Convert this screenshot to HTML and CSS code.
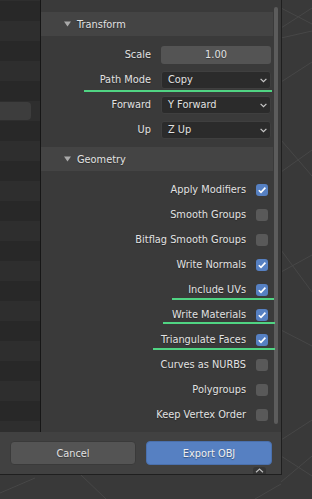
FILE: index.html
```html
<!DOCTYPE html>
<html>
<head>
<meta charset="utf-8">
<link rel="stylesheet" href="styles.css">
</head>
<body>
<svg class="viewport" width="312" height="499" viewBox="0 0 312 499">
  <g stroke="#474747" stroke-width="1" fill="none">
    <line x1="281" y1="8" x2="312" y2="24"/>
    <line x1="281" y1="28" x2="312" y2="8"/>
    <line x1="281" y1="38" x2="312" y2="31"/>
    <line x1="281" y1="82" x2="312" y2="62"/>
    <line x1="281" y1="172" x2="312" y2="150"/>
    <line x1="281" y1="140" x2="312" y2="176"/>
    <line x1="281" y1="272" x2="312" y2="255"/>
    <line x1="281" y1="250" x2="312" y2="292"/>
    <line x1="281" y1="330" x2="312" y2="346"/>
    <line x1="281" y1="440" x2="312" y2="420"/>
    <line x1="281" y1="482" x2="312" y2="456"/>
    <line x1="281" y1="456" x2="312" y2="476"/>
    <line x1="0" y1="493" x2="35" y2="478"/>
    <line x1="80" y1="474" x2="106" y2="499"/>
    <line x1="255" y1="499" x2="281" y2="484"/>
  </g>
</svg>

<div class="dialog">
  <div class="main">
    <div class="sidebar">
      <div class="srow"></div><div class="srow"></div><div class="srow"></div><div class="srow"></div><div class="srow"></div>
      <div class="srow"><div class="sinput"></div></div>
      <div class="srow"></div><div class="srow"></div><div class="srow"></div><div class="srow"></div><div class="srow"></div>
      <div class="srow"></div><div class="srow"></div><div class="srow"></div><div class="srow"></div><div class="srow"></div>
      <div class="srow"></div><div class="srow"></div><div class="srow"></div><div class="srow"></div><div class="srow"></div>
    </div>
    <div class="content">
      <div class="panel">
        <div class="header header-first">
          <svg class="tri" width="7" height="6" viewBox="0 0 7 6"><polygon points="0,0.5 7,0.5 3.5,5.5" fill="#a9a9a9"/></svg>
          <span>Transform</span>
        </div>
        <div class="rows">
          <div class="prow">
            <span class="plabel">Scale</span>
            <div class="numfield">1.00</div>
          </div>
          <div class="prow">
            <span class="plabel">Path Mode</span>
            <div class="menu"><span>Copy</span><svg width="7" height="5" viewBox="0 0 7 5"><polyline points="0.6,0.8 3.5,3.7 6.4,0.8" fill="none" stroke="#c9c9c9" stroke-width="1.2"/></svg></div>
          </div>
          <div class="prow">
            <span class="plabel">Forward</span>
            <div class="menu"><span>Y Forward</span><svg width="7" height="5" viewBox="0 0 7 5"><polyline points="0.6,0.8 3.5,3.7 6.4,0.8" fill="none" stroke="#c9c9c9" stroke-width="1.2"/></svg></div>
          </div>
          <div class="prow">
            <span class="plabel">Up</span>
            <div class="menu"><span>Z Up</span><svg width="7" height="5" viewBox="0 0 7 5"><polyline points="0.6,0.8 3.5,3.7 6.4,0.8" fill="none" stroke="#c9c9c9" stroke-width="1.2"/></svg></div>
          </div>
        </div>

        <div class="header header-second">
          <svg class="tri" width="7" height="6" viewBox="0 0 7 6"><polygon points="0,0.5 7,0.5 3.5,5.5" fill="#a9a9a9"/></svg>
          <span>Geometry</span>
        </div>
        <div class="rows">
          <div class="crow"><span class="clabel">Apply Modifiers</span><span class="check on"><svg width="12" height="12" viewBox="0 0 12 12"><polyline points="2.8,6.2 5,8.4 9.4,3.6" fill="none" stroke="#fff" stroke-width="1.6"/></svg></span></div>
          <div class="crow"><span class="clabel">Smooth Groups</span><span class="check"></span></div>
          <div class="crow"><span class="clabel">Bitflag Smooth Groups</span><span class="check"></span></div>
          <div class="crow"><span class="clabel">Write Normals</span><span class="check on"><svg width="12" height="12" viewBox="0 0 12 12"><polyline points="2.8,6.2 5,8.4 9.4,3.6" fill="none" stroke="#fff" stroke-width="1.6"/></svg></span></div>
          <div class="crow"><span class="clabel">Include UVs</span><span class="check on"><svg width="12" height="12" viewBox="0 0 12 12"><polyline points="2.8,6.2 5,8.4 9.4,3.6" fill="none" stroke="#fff" stroke-width="1.6"/></svg></span></div>
          <div class="crow"><span class="clabel">Write Materials</span><span class="check on"><svg width="12" height="12" viewBox="0 0 12 12"><polyline points="2.8,6.2 5,8.4 9.4,3.6" fill="none" stroke="#fff" stroke-width="1.6"/></svg></span></div>
          <div class="crow"><span class="clabel">Triangulate Faces</span><span class="check on"><svg width="12" height="12" viewBox="0 0 12 12"><polyline points="2.8,6.2 5,8.4 9.4,3.6" fill="none" stroke="#fff" stroke-width="1.6"/></svg></span></div>
          <div class="crow"><span class="clabel">Curves as NURBS</span><span class="check"></span></div>
          <div class="crow"><span class="clabel">Polygroups</span><span class="check"></span></div>
          <div class="crow"><span class="clabel">Keep Vertex Order</span><span class="check"></span></div>
        </div>
      </div>
      <div class="scrollcol"><div class="thumb"></div></div>
    </div>
  </div>
  <div class="footer">
    <div class="btn btn-cancel">Cancel</div>
    <div class="btn btn-export">Export OBJ</div>
    <div class="tab"><svg width="9" height="5" viewBox="0 0 9 5"><polyline points="1,4.2 4.5,1 8,4.2" fill="none" stroke="#bdbdbd" stroke-width="1.2"/></svg></div>
  </div>
</div>

<div class="mark mark-path"></div>
<div class="mark mark-uvs"></div>
<div class="mark mark-mat"></div>
<div class="mark mark-tri"></div>
</body>
</html>
```

FILE: styles.css
```css
* { box-sizing: border-box; }

html, body {
  margin: 0;
  padding: 0;
}

body {
  width: 312px;
  height: 499px;
  overflow: hidden;
  background: #393939;
  position: relative;
  font-family: "DejaVu Sans", "Liberation Sans", sans-serif;
  font-size: 9.8px;
  color: #e2e2e2;
}

.viewport {
  position: absolute;
  left: 0;
  top: 0;
}

.dialog {
  position: relative;
  width: 282px;
  height: 475px;
  border-right: 1px solid #1f1f1f;
  border-bottom: 1px solid #1f1f1f;
  display: flex;
  flex-direction: column;
  background: #3a3a3a;
}

.main {
  display: flex;
  height: 432px;
}

.sidebar {
  width: 41px;
  border-right: 1px solid #161616;
  background: #2e2e2e;
  padding-top: 1px;
  display: flex;
  flex-direction: column;
  overflow: hidden;
}

.srow {
  height: 20px;
  flex: none;
  background: #2e2e2e;
}

.srow:nth-child(odd) {
  background: #282828;
}

.sinput {
  width: 31px;
  height: 18px;
  margin-top: 1px;
  background: #3d3d3d;
  border-radius: 0 4px 4px 0;
}

.content {
  flex: 1;
  display: flex;
}

.panel {
  width: 232px;
  background: #3a3a3a;
}

.header {
  height: 24px;
  background: #444444;
  display: flex;
  align-items: center;
  padding-left: 23px;
  text-shadow: 0 1px 1px rgba(0, 0, 0, 0.35);
}

.header .tri {
  margin-right: 6px;
  margin-top: -1px;
}

.header-first { margin-top: 12px; }
.header-second { margin-top: 5px; }

.rows {
  margin-top: 6px;
  display: flex;
  flex-direction: column;
}

.prow {
  height: 25px;
  display: flex;
  align-items: center;
}

.plabel {
  width: 110px;
  text-align: right;
  text-shadow: 0 1px 1px rgba(0, 0, 0, 0.35);
}

.numfield {
  margin-left: 10px;
  width: 110px;
  height: 18px;
  background: #545454;
  border-radius: 3px;
  display: flex;
  align-items: center;
  justify-content: center;
  text-shadow: 0 1px 1px rgba(0, 0, 0, 0.35);
}

.menu {
  margin-left: 10px;
  width: 110px;
  height: 18px;
  background: #2b2b2b;
  border: 1px solid #3f3f3f;
  border-radius: 3px;
  display: flex;
  align-items: center;
  justify-content: space-between;
  padding: 0 3px 0 6px;
  text-shadow: 0 1px 1px rgba(0, 0, 0, 0.35);
}

.menu svg { margin-top: 1px; }

.crow {
  height: 25px;
  display: flex;
  align-items: center;
}

.clabel {
  width: 205px;
  text-align: right;
  white-space: nowrap;
  text-shadow: 0 1px 1px rgba(0, 0, 0, 0.35);
}

.check {
  margin-left: 10px;
  width: 12px;
  height: 12px;
  border-radius: 3px;
  background: #595959;
  display: flex;
}

.check.on {
  background: #5680c2;
}

.scrollcol {
  width: 8px;
  padding-top: 7px;
  padding-left: 1px;
}

.thumb {
  width: 4px;
  height: 417px;
  background: #5c5c5c;
  border-radius: 2px;
}

.footer {
  position: relative;
  height: 42px;
  background: #414141;
  display: flex;
  gap: 10px;
  padding: 9px 9px 9px 10px;
}

.btn {
  width: 126px;
  height: 24px;
  border-radius: 4px;
  display: flex;
  align-items: center;
  justify-content: center;
  text-shadow: 0 1px 1px rgba(0, 0, 0, 0.35);
}

.btn-cancel {
  background: #545454;
  border: 1px solid #3a3a3a;
}

.btn-export {
  background: #5680c2;
  border: 1px solid #4a70ad;
  color: #f0f0f0;
}

.tab {
  position: absolute;
  left: 253px;
  top: 35px;
  width: 13px;
  height: 7px;
  background: #353535;
  border-radius: 3px 3px 0 0;
  display: flex;
  justify-content: center;
  align-items: flex-start;
  padding-top: 1px;
}

.mark {
  position: absolute;
  height: 2px;
  background: #50d483;
}

.mark-path { left: 84px; top: 90px; width: 188px; }
.mark-uvs { left: 172px; top: 298px; width: 102px; }
.mark-mat { left: 163px; top: 322px; width: 112px; }
.mark-tri { left: 153px; top: 348px; width: 122px; }
```
